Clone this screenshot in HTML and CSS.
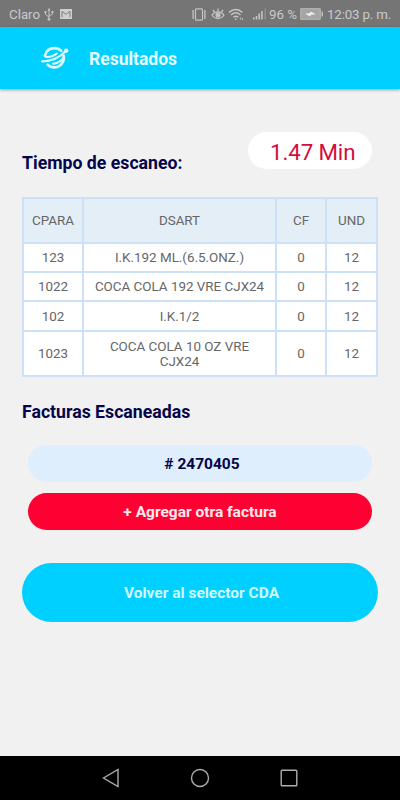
FILE: index.html
```html
<!DOCTYPE html>
<html lang="es">
<head>
    <meta charset="UTF-8">
    <meta name="viewport" content="width=device-width, initial-scale=1.0">
    <title>Resultados</title>
    <link rel="stylesheet" href="styles.css">
</head>
<body>
    <div class="status-bar">
        <span class="carrier">Claro</span>
        <svg class="usb" width="10" height="13" viewBox="0 0 10 13" fill="none" stroke="#c4c4c4">
            <path d="M5 1v10M1.500 4v2.500L5 9M8.500 4v2L5 8"/>
            <path d="M5 0L3.300 2.500h3.400zM.5 3h2v2h-2zM7.500 3h2v2h-2z" fill="#c4c4c4" stroke="none"/>
            <circle cx="5" cy="11.300" r="1.400" fill="#c4c4c4" stroke="none"/>
        </svg>
        <svg class="mail" width="12" height="10" viewBox="0 0 12 10">
            <path d="M0 0h12v10H0z" fill="#cfcfcf"/>
            <path d="M2 8.200V2.300l4 3 4-3v5.900" fill="none" stroke="#757575" stroke-width=".9"/>
        </svg>
        <svg class="vibrate" width="16" height="13" viewBox="0 0 16 13" fill="none" stroke="#c4c4c4" stroke-width="1.200">
            <rect x="4.500" y=".8" width="7" height="11.400" rx="1"/>
            <path d="M2.500 2l-.8 1.500.8 1.500-.8 1.500.8 1.500-.8 1.500.8 1.500M13.500 2l.8 1.500-.8 1.500.8 1.500-.8 1.500.8 1.500-.8 1.500"/>
        </svg>
        <svg class="eye" width="14" height="12" viewBox="0 0 14 12" fill="none" stroke="#c4c4c4" stroke-width="1.300">
            <path d="M1 7c3-4.300 9-4.300 12 0-3 4.700-9 4.700-12 0zM7 3.500V.5M3.500 4L2 2M10.500 4L12 2"/>
            <circle cx="7" cy="7" r="1.900" fill="#c4c4c4"/>
        </svg>
        <svg class="wifi" width="16" height="13" viewBox="0 0 16 13" fill="none" stroke="#c4c4c4" stroke-width="1.400">
            <path d="M1 4.500c4-4 9.500-4 13.500 0M3 7c3-2.800 6.500-2.800 9.500 0M5.300 9.300c1.600-1.400 3.300-1.400 5 0"/>
            <circle cx="7.800" cy="11.200" r=".9" fill="#c4c4c4" stroke="none"/>
            <path d="M12.300 9.500v2M14.300 10v2" stroke-width="1"/>
        </svg>
        <svg class="signal" width="14" height="12" viewBox="0 0 14 12">
            <path d="M0 9.500h1.600V11.500H0zM2.700 8h1.600v3.500H2.700zM5.400 5.500H7v6H5.400zM8.100 3h1.600v8.500H8.100z" fill="#c4c4c4"/>
            <path d="M11.500.5h1.400v11h-1.400z" fill="#929292"/>
        </svg>
        <span class="percent">96 %</span>
        <svg class="battery" width="24" height="12" viewBox="0 0 24 12">
            <path d="M.7.700h19.600v10.600H.7z" fill="#a4a4a4" stroke="#b8b8b8"/>
            <path d="M21.500 3.500H23v5h-1.500z" fill="#c0c0c0"/>
            <path d="M5 5.800l5-.8.500-1.500L16 6.200l-5.200.6-.5 1.700z" fill="#eee"/>
        </svg>
        <span class="clock">12:03 p. m.</span>
    </div>

    <div class="header">
        <svg class="logo" width="28" height="24" viewBox="0 0 28 24" fill="none" stroke="#dcfbff" stroke-linecap="round">
            <path d="M4 9.500C5.200 5 9 2.200 13.500 2.200c2.700 0 4.900.9 6.700 2.600M22.600 9.500c1.300 6.200-3.100 11.900-9.100 11.900-2.700 0-5.100-1-6.900-2.800" stroke-width="2.700"/>
            <path d="M1.200 15.300C10.500 15.500 18 12 25 5" stroke-width="2.300"/>
            <path d="M4.500 10.800c4.700.4 8-.3 11.300-3.300" stroke-width="2"/>
            <path d="M12 17.800c3.500-.2 7-2 10-5.300" stroke-width="2"/>
            <circle cx="25.200" cy="4.600" r="2.200" fill="#dcfbff" stroke="none"/>
        </svg>
        <h1>Resultados</h1>
    </div>

    <div class="content">
        <div class="scan-time">
            <h2>Tiempo de escaneo:</h2>
            <div class="time">1.47 Min</div>
        </div>

        <table class="items">
            <colgroup>
                <col class="col-code">
                <col class="col-name">
                <col class="col-cf">
                <col class="col-und">
            </colgroup>
            <tr class="head"><th>CPARA</th><th>DSART</th><th>CF</th><th>UND</th></tr>
            <tr><td>123</td><td>I.K.192 ML.(6.5.ONZ.)</td><td>0</td><td>12</td></tr>
            <tr><td>1022</td><td>COCA COLA 192 VRE CJX24</td><td>0</td><td>12</td></tr>
            <tr class="tall"><td>102</td><td>I.K.1/2</td><td>0</td><td>12</td></tr>
            <tr class="double"><td>1023</td><td>COCA COLA 10 OZ VRE<br>CJX24</td><td>0</td><td>12</td></tr>
        </table>

        <h2 class="invoices-title">Facturas Escaneadas</h2>
        <div class="invoice"># 2470405</div>
        <button class="add">+ Agregar otra factura</button>
        <button class="back">Volver al selector CDA</button>
    </div>

    <div class="nav-bar">
        <svg width="18" height="20" viewBox="0 0 18 20"><path d="M1.500 10L16 1.500v17z"/></svg>
        <svg width="20" height="20" viewBox="0 0 20 20"><circle cx="10" cy="10" r="8.500"/></svg>
        <svg width="18" height="18" viewBox="0 0 18 18"><rect x="1.200" y="1.200" width="15.600" height="15.600" rx=".8"/></svg>
    </div>
</body>
</html>
```
FILE: styles.css
```css
body {
    font-family: Roboto, sans-serif;
    background-color: #f1f1f1;
    margin: 0;
    height: 800px;
    display: flex;
    flex-direction: column;
    overflow: hidden;
}
h1, h2 {
    margin: 0;
    font-weight: bold;
}
svg {
    display: block;
    flex: none;
}
.status-bar {
    box-sizing: border-box;
    height: 27px;
    padding: 1px 9px 0;
    background-color: #757575;
    color: #cacaca;
    font-size: 13.3px;
    display: flex;
    align-items: center;
    white-space: nowrap;
}
.carrier {
    width: 35px;
}
.mail {
    margin-left: 6px;
}
.vibrate {
    margin-left: auto;
}
.eye {
    margin-left: 4px;
}
.wifi {
    margin-left: 3px;
}
.signal {
    margin-left: 9px;
}
.percent {
    margin-left: 2px;
    width: 28px;
}
.battery {
    margin-left: 3px;
}
.clock {
    margin-left: 3px;
    width: 64px;
    letter-spacing: -0.15px;
}
.header {
    box-sizing: border-box;
    height: 62px;
    padding-left: 41px;
    background-color: #00d0ff;
    box-shadow: 0 1px 3px rgba(0, 0, 0, 0.35);
    display: flex;
    align-items: center;
    gap: 20px;
}
.header h1 {
    color: #e2fcff;
    font-size: 17.5px;
    padding-top: 2px;
}
.content {
    flex: 1;
    padding: 43px 22px 0;
}
.scan-time {
    display: flex;
    justify-content: space-between;
    height: 65px;
}
h2 {
    color: #05054b;
    font-size: 17.7px;
    line-height: 20px;
}
.scan-time h2 {
    padding-top: 21px;
}
.time {
    box-sizing: border-box;
    width: 124px;
    height: 37px;
    margin-right: 6px;
    padding: 1px 0 0 22px;
    border-radius: 19px;
    background-color: #fff;
    color: #d30d3c;
    font-size: 22.3px;
    letter-spacing: -0.1px;
    line-height: 38px;
    white-space: nowrap;
}
.items {
    width: 356px;
    table-layout: fixed;
    border-collapse: collapse;
    background-color: #fff;
    color: #666;
    font-size: 13.4px;
    line-height: 15px;
    text-align: center;
}
.items th, .items td {
    border: 2px solid #cbe1f7;
    padding: 0;
    font-weight: normal;
}
.items tr {
    height: 29px;
}
.items .head {
    height: 45px;
    background-color: #e3eef7;
}
.items .tall {
    height: 30px;
}
.items .double {
    height: 45px;
}
.col-code {
    width: 60px;
}
.col-name {
    width: 193px;
}
.col-cf {
    width: 50px;
}
.col-und {
    width: 51px;
}
.invoices-title {
    margin-top: 25px;
}
.invoice, .add {
    height: 37px;
    margin: 23px 6px 0;
    border-radius: 19px;
    background-color: #dfeefc;
    color: #05054b;
    font-size: 15.5px;
    font-weight: bold;
    line-height: 38px;
    text-align: center;
}
.invoice {
    text-indent: 4px;
}
button {
    display: block;
    border: none;
    padding: 0;
    font-family: inherit;
}
.add {
    width: 344px;
    margin-top: 10.6px;
    background-color: #ff0032;
    color: #ffe9ee;
}
.back {
    width: 356px;
    height: 59px;
    margin-top: 33px;
    padding: 2px 0 0 3px;
    border-radius: 30px;
    background-color: #00d0ff;
    color: #d0faff;
    font-size: 15.5px;
    font-weight: bold;
}
.nav-bar {
    box-sizing: border-box;
    height: 44px;
    padding: 0 102px;
    background-color: #000;
    display: flex;
    align-items: center;
    justify-content: space-between;
}
.nav-bar svg {
    fill: none;
    stroke: #adadad;
    stroke-width: 1.4;
}
```
